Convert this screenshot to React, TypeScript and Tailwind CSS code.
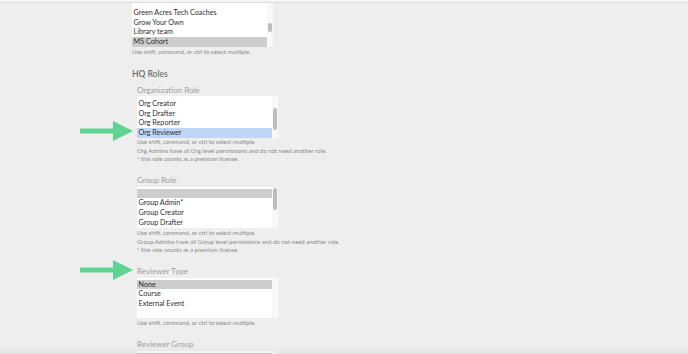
type Item = { label: string; tone?: "gray" | "blue" };

function Arrow({ top }: { top: number }) {
  // green annotation arrow pointing at a field
  return (
    <svg
      className="absolute left-[80px]"
      style={{ top }}
      width="54"
      height="20"
      viewBox="0 0 54 20"
    >
      <rect x="0" y="7.5" width="35" height="5" fill="#5fd391" />
      <polygon points="33,0 53,10 33,20" fill="#5fd391" />
    </svg>
  );
}

function ListBox({
  items,
  height,
  offset,
  thumb,
}: {
  items: Item[];
  height: string;
  offset: string;
  thumb?: { top: string; h: string };
}) {
  return (
    <div className={`flex ${height} overflow-hidden`}>
      <div className="w-[135px] bg-white overflow-hidden">
        <div className={offset}>
          {items.map((it, i) => (
            <div
              key={i}
              className={`h-[9.7px] leading-[9.7px] pl-[1.5px] text-[7.2px] text-[#2f2f2f] whitespace-nowrap ${
                it.tone === "gray" ? "bg-[#cdcdcd]" : it.tone === "blue" ? "bg-[#bfd6f7]" : ""
              }`}
            >
              {it.label}
            </div>
          ))}
        </div>
      </div>
      <div className="w-[6px] bg-[#f8f8f8] flex flex-col items-center">
        {thumb && (
          <div className={`${thumb.top} ${thumb.h} w-[3.5px] rounded-full bg-[#bdbdbd]`} />
        )}
      </div>
    </div>
  );
}

function Help({ lines, className = "" }: { lines: string[]; className?: string }) {
  return (
    <div className={`text-[6px] leading-[8.8px] text-[#8a8a8a] ${className}`}>
      {lines.map((l) => (
        <div key={l}>{l}</div>
      ))}
    </div>
  );
}

const multi = "Use shift, command, or ctrl to select multiple.";

export default function App() {
  return (
    <div
      className="relative w-[688px] h-[354px] overflow-hidden bg-[#eeeeee]"
      style={{ fontFamily: "Lato, 'Noto Sans', sans-serif" }}
    >
      <div className="h-[3px] bg-[#f5f5f5] border-b border-[#dcdcdc]" />

      <div className="pl-[132px] flex flex-col">
        {/* groups list (scrolled) */}
        <ListBox
          height="h-[44px]"
          offset="-mt-[4.8px]"
          thumb={{ top: "mt-[20px]", h: "h-[9px]" }}
          items={[
            { label: "" },
            { label: "Green Acres Tech Coaches" },
            { label: "Grow Your Own" },
            { label: "Library team" },
            { label: "MS Cohort", tone: "gray" },
          ]}
        />
        <Help lines={[multi]} className="mt-[1px]" />

        <div className="mt-[11px] h-[12px] leading-[12px] text-[8.5px] font-semibold text-[#6f6f6f]">
          HQ Roles
        </div>

        <div className="pl-[5px] flex flex-col">
          {/* Organization Role */}
          <div className="mt-[5px] h-[10px] leading-[10px] text-[8px] text-[#9d9d9d]">
            Organization Role
          </div>
          <div className="mt-[1px]">
            <ListBox
              height="h-[42px]"
              offset="-mt-[6.5px]"
              thumb={{ top: "mt-[12px]", h: "h-[22px]" }}
              items={[
                { label: "" },
                { label: "Org Creator" },
                { label: "Org Drafter" },
                { label: "Org Reporter" },
                { label: "Org Reviewer", tone: "blue" },
              ]}
            />
          </div>
          <Help
            lines={[
              multi,
              "Org Admins have all Org level permissions and do not need another role.",
              "* this role counts as a premium license.",
            ]}
          />

          {/* Group Role */}
          <div className="mt-[10.6px] h-[10px] leading-[10px] text-[8px] text-[#9d9d9d]">
            Group Role
          </div>
          <div className="mt-[2px]">
            <ListBox
              height="h-[41px]"
              offset="pt-[2px]"
              thumb={{ top: "mt-[1px]", h: "h-[22px]" }}
              items={[
                { label: "", tone: "gray" },
                { label: "Group Admin*" },
                { label: "Group Creator" },
                { label: "Group Drafter" },
              ]}
            />
          </div>
          <Help
            className="mt-[1px]"
            lines={[
              multi,
              "Group Admins have all Group level permissions and do not need another role.",
              "* this role counts as a premium license.",
            ]}
          />

          {/* Reviewer Type */}
          <div className="mt-[10.6px] h-[10px] leading-[10px] text-[8px] text-[#9d9d9d]">
            Reviewer Type
          </div>
          <div className="mt-[2px]">
            <ListBox
              height="h-[40px]"
              offset="pt-[2px]"
              items={[
                { label: "None", tone: "gray" },
                { label: "Course" },
                { label: "External Event" },
              ]}
            />
          </div>
          <Help lines={[multi]} className="mt-[1px]" />

          {/* Reviewer Group */}
          <div className="mt-[11px] h-[10px] leading-[10px] text-[8px] text-[#9d9d9d]">
            Reviewer Group
          </div>
          <div className="mt-[2px]">
            <ListBox
              height="h-[20px]"
              offset="pt-[2px]"
              items={[{ label: "", tone: "gray" }]}
            />
          </div>
        </div>
      </div>

      <Arrow top={121} />
      <Arrow top={260} />

      <div className="absolute left-0 right-0 bottom-0 h-[8px] bg-gradient-to-b from-transparent to-black/5" />
    </div>
  );
}
